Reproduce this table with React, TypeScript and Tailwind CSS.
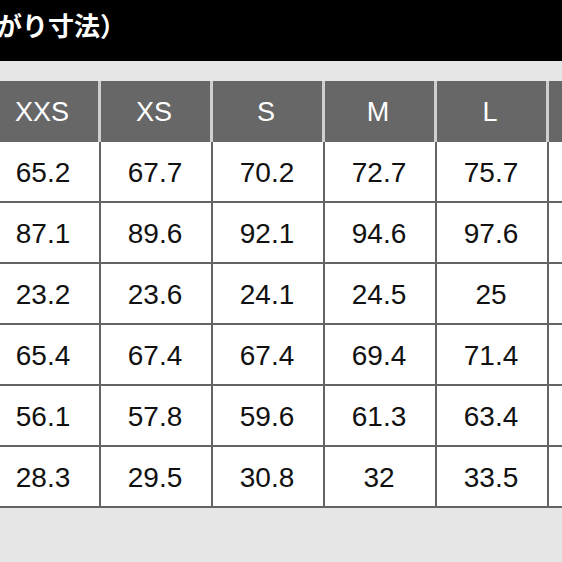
const sizes = ["XXS", "XS", "S", "M", "L", ""];

const rows = [
  ["65.2", "67.7", "70.2", "72.7", "75.7", ""],
  ["87.1", "89.6", "92.1", "94.6", "97.6", ""],
  ["23.2", "23.6", "24.1", "24.5", "25", ""],
  ["65.4", "67.4", "67.4", "69.4", "71.4", ""],
  ["56.1", "57.8", "59.6", "61.3", "63.4", ""],
  ["28.3", "29.5", "30.8", "32", "33.5", ""],
];

export default function App() {
  return (
    <div className="w-[562px] h-[562px] overflow-hidden bg-[#e6e6e6] font-['Liberation_Sans',sans-serif]">
      <div className="h-[61px] bg-black pt-[8px]">
        <div className="ml-[-4px] text-white text-[26px] font-bold leading-[34px] font-['Noto_Sans_CJK_JP',sans-serif] whitespace-nowrap">
          がり寸法）
        </div>
      </div>
      <div className="h-[20px]" />
      <div className="ml-[-11px] w-max">
        <div className="flex">
          {sizes.map((s, i) => (
            <div
              key={i}
              className="w-[112px] h-[61px] shrink-0 flex items-center justify-center bg-[#676767] border-r-[3px] border-[#cfcfcf] text-white text-[27px] pr-[3px] pt-[2px]"
            >
              {s}
            </div>
          ))}
        </div>
        {rows.map((r, i) => (
          <div key={i} className="flex">
            {r.map((v, j) => (
              <div
                key={j}
                className="w-[112px] h-[61px] shrink-0 flex items-center justify-center bg-white border-r-2 border-b-2 border-[#646464] text-[#111] text-[28px] pr-[2px] pt-[3px]"
              >
                {v}
              </div>
            ))}
          </div>
        ))}
      </div>
    </div>
  );
}
